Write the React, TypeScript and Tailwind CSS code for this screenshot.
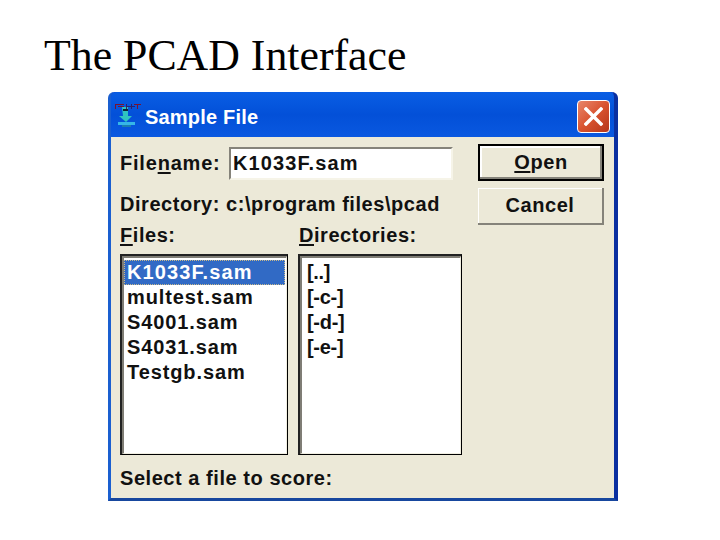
const files = ["multest.sam", "S4001.sam", "S4031.sam", "Testgb.sam"];
const dirs = ["[..]", "[-c-]", "[-d-]", "[-e-]"];

function AppIcon() {
  return (
    <svg width="32" height="32" viewBox="0 0 32 32" className="shrink-0">
      <path d="M11 6h6v9h4l-6 6-7-6h4z" fill="#2fc4c0" />
      <rect x="7" y="21" width="17" height="3" fill="#35b6e8" />
      <rect x="11" y="24" width="9" height="2" fill="#1a7fb0" />
      <rect x="12" y="8" width="5" height="2" fill="#123" />
      <rect x="4" y="3" width="9" height="1" fill="#7a1230" />
      <rect x="4" y="3" width="1" height="5" fill="#7a1230" />
      <rect x="7" y="5" width="6" height="1" fill="#7a1230" />
      <rect x="15" y="3" width="1" height="5" fill="#30206a" />
      <rect x="15" y="5" width="9" height="1" fill="#30206a" />
      <rect x="20" y="3" width="1" height="5" fill="#30206a" />
      <rect x="23" y="3" width="7" height="1" fill="#7a1230" />
      <rect x="26" y="3" width="1" height="5" fill="#7a1230" />
    </svg>
  );
}

function ListBox({ children, width }: { children: React.ReactNode; width: string }) {
  return (
    <div className={`h-[201px] ${width} border border-black bg-white border-t-2 border-l-2 [border-top-color:#222] [border-left-color:#222]`}>
      <div className="h-full border-t-2 border-l-2 border-t-[#7f7d75] border-l-[#7f7d75] border-r border-b border-r-[#f1efe2] border-b-[#f1efe2] pt-[2px] pr-[1px] tracking-[0.9px]">
        {children}
      </div>
    </div>
  );
}

function Underlined({ children }: { children: React.ReactNode }) {
  return <span className="underline underline-offset-2 decoration-2">{children}</span>;
}

export default function App() {
  return (
    <div className="w-[720px] h-[540px] bg-white overflow-hidden font-['Liberation_Serif',serif]">
      <h1 className="pt-[31px] pl-[44px] text-[43.8px] leading-[48px] text-black font-normal">The PCAD Interface</h1>
      <div className="ml-[108px] mt-[13px] w-[510px] h-[409px] flex flex-col rounded-t-[6px] bg-[#0a52dc] border-l-[3px] border-r-[4px] border-b-[3px] border-l-[#1a5fd0] border-r-[#0a2fa0] border-b-[#17479e] font-['Liberation_Sans',sans-serif] font-bold text-[20px] leading-[25px] tracking-[0.55px] text-[#111]">
        <div className="h-[45px] shrink-0 flex items-center pt-[4px] pr-[4px] rounded-t-[6px] bg-gradient-to-b from-[#0a5ee4] via-[#0350d8] to-[#0a58e0]">
          <AppIcon />
          <span className="ml-[2px] mt-[1px] text-white tracking-[0.2px]">Sample File</span>
          <button className="ml-auto w-[33px] h-[33px] rounded-[4px] border border-white bg-gradient-to-br from-[#e8866a] via-[#d9532f] to-[#b5361a] flex items-center justify-center">
            <svg width="19" height="19" viewBox="0 0 19 19">
              <path d="M2 2l15 15M17 2L2 17" stroke="white" strokeWidth="3.4" strokeLinecap="square" />
            </svg>
          </button>
        </div>
        <div className="flex-1 bg-[#ece9d8] flex pl-[9px] pt-[7px]">
          <div className="w-[358px] shrink-0 flex flex-col">
            <div className="flex items-center h-[36px] mt-[1px]">
              <span className="w-[109px] tracking-[0.8px]">File<Underlined>n</Underlined>ame:</span>
              <div className="w-[224px] h-[33px] bg-white border-2 border-t-[#85837a] border-l-[#85837a] border-r-[#f6f4e8] border-b-[#f6f4e8] pl-[2px] leading-[29px] tracking-[1.1px]">K1033F.sam</div>
            </div>
            <div className="mt-[11px]">Directory: c:\program files\pcad</div>
            <div className="flex mt-[6px]">
              <span className="w-[179px]"><Underlined>F</Underlined>iles:</span>
              <span><Underlined>D</Underlined>irectories:</span>
            </div>
            <div className="flex mt-[6px] gap-[10px]">
              <ListBox width="w-[168px]">
                <div className="bg-[#316ac5] text-white outline-dotted outline-1 -outline-offset-1 outline-[#c9b98a] h-[25px] pl-[3px] tracking-[1.1px]">K1033F.sam</div>
                {files.map((f) => (
                  <div key={f} className="pl-[3px]">{f}</div>
                ))}
              </ListBox>
              <ListBox width="w-[164px]">
                {dirs.map((d) => (
                  <div key={d} className="pl-[5px] tracking-[-0.3px]">{d}</div>
                ))}
              </ListBox>
            </div>
            <div className="mt-[11px]">Select a file to score:</div>
          </div>
          <div className="flex flex-col gap-[7px]">
            <button className="w-[126px] h-[37px] bg-[#ece9d8] border-2 border-black shadow-[inset_-2px_-2px_0_#85837a,inset_2px_2px_0_#fff] font-bold"><Underlined>O</Underlined>pen</button>
            <button className="w-[126px] h-[37px] bg-[#ece9d8] border-r-2 border-b-2 border-r-[#85837a] border-b-[#85837a] shadow-[inset_1px_1px_0_#fff] font-bold">Cancel</button>
          </div>
        </div>
      </div>
    </div>
  );
}
